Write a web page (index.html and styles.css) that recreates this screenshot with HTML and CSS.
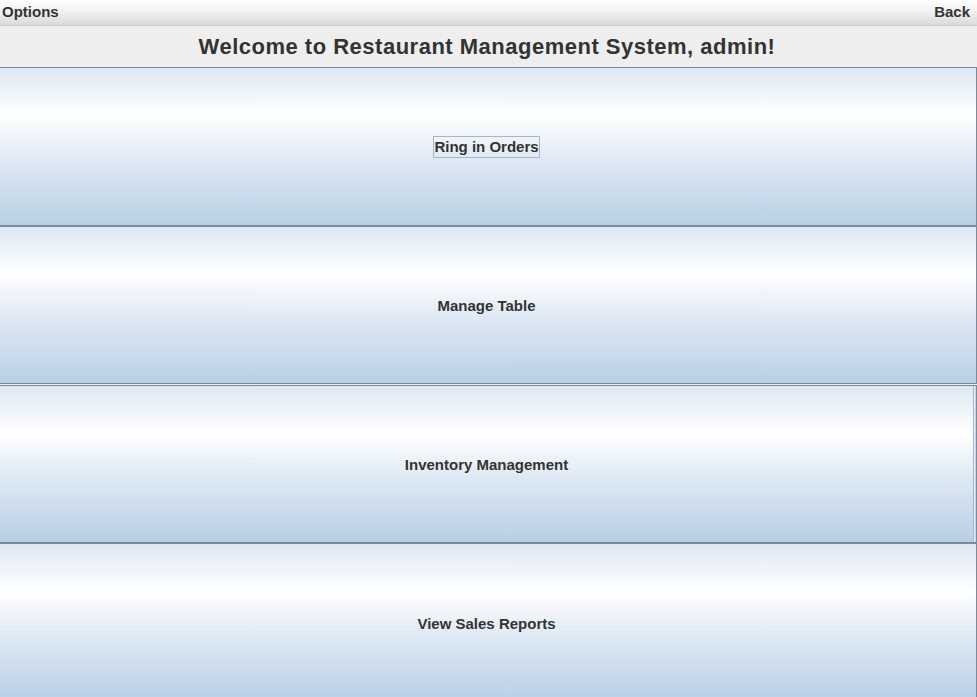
FILE: index.html
```html
<!DOCTYPE html>
<html>
<head>
<meta charset="utf-8">
<link rel="stylesheet" href="styles.css">
</head>
<body>
<div class="app">
  <div class="menubar">
    <span class="menu">Options</span>
    <span class="menu">Back</span>
  </div>
  <div class="title">Welcome to Restaurant Management System, admin!</div>
  <div class="buttons">
    <div class="btn b1"><span class="label focus">Ring in Orders</span></div>
    <div class="btn b2"><span class="label">Manage Table</span></div>
    <div class="btn b3"><span class="label">Inventory Management</span></div>
    <div class="btn b4"><span class="label">View Sales Reports</span></div>
  </div>
</div>
</body>
</html>
```
FILE: styles.css
```css
html, body {
  margin: 0;
  padding: 0;
  background: #eeeeee;
  overflow: hidden;
}
.app {
  width: 977px;
  height: 697px;
  display: flex;
  flex-direction: column;
  font-family: "Liberation Sans", Arial, sans-serif;
  color: #333333;
  overflow: hidden;
}
.menubar {
  height: 25px;
  flex: none;
  display: flex;
  justify-content: space-between;
  align-items: flex-start;
  background: linear-gradient(#ffffff 0%, #f3f3f3 40%, #dadada 100%);
  border-bottom: 1px solid #cccccc;
  font-size: 15px;
  font-weight: bold;
}
.menu {
  padding: 0 8px 0 2px;
  line-height: 23px;
}
.menu:last-child {
  padding: 0 7px 0 8px;
}
.title {
  height: 41px;
  flex: none;
  display: flex;
  align-items: center;
  justify-content: center;
  font-size: 22px;
  font-weight: bold;
  letter-spacing: 0.5px;
  background: #eeeeee;
  padding-right: 3px;
}
.buttons {
  flex: 1;
  display: flex;
  flex-direction: column;
  margin-left: -1px;
}
.btn {
  flex: none;
  box-sizing: border-box;
  border: 1px solid #7a8a99;
  display: flex;
  align-items: center;
  justify-content: center;
  font-size: 15px;
  font-weight: bold;
  padding-right: 3px;
  padding-top: 2px;
  background: linear-gradient(#dde8f3 0%, #ffffff 30%, #dde8f3 60%, #b8cfe5 100%);
}
.b1 { height: 159px; padding-top: 0; }
.b2 { height: 158px; }
.b3 {
  height: 158px;
  margin-top: 1px;
  box-shadow: inset -1px 0 0 #c4d4e4, inset -2px 0 0 #e8eef5, inset -3px 0 0 #a4b8cc;
}
.b4 { height: 160px; }
.label {
  padding: 1px 0;
  line-height: 18px;
  border: 1px solid transparent;
}
.label.focus {
  border-color: #a3b8cc;
}
```
